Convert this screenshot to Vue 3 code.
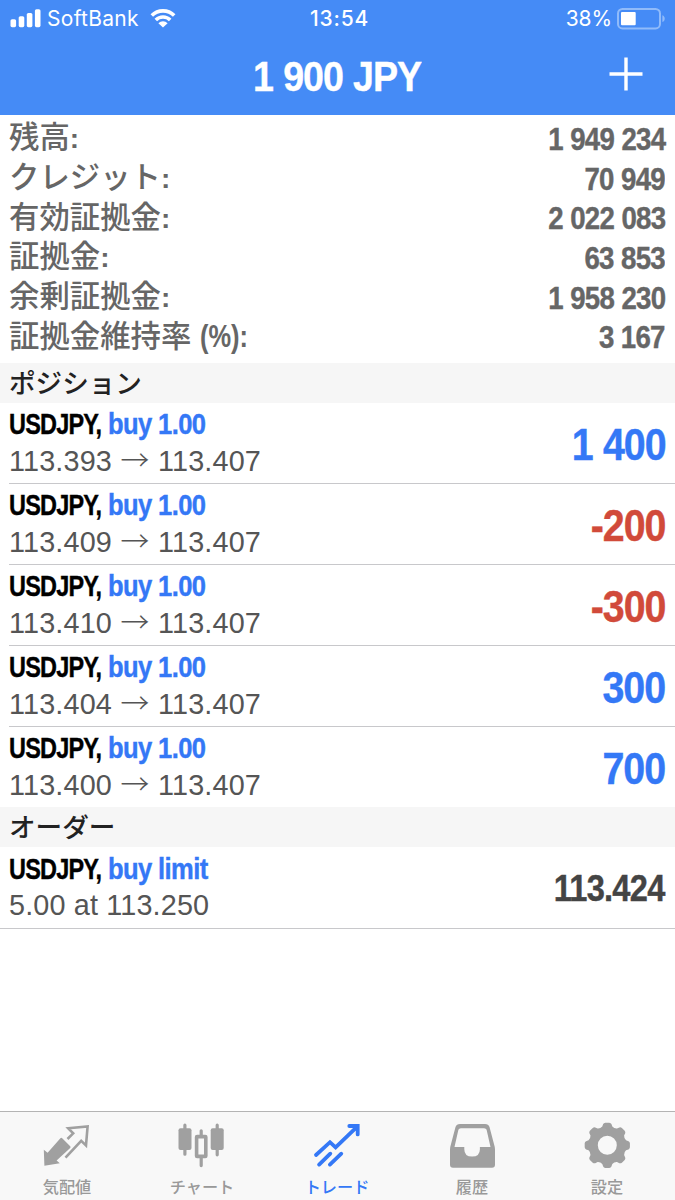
<template>
  <div class="phone">
    <header class="top">
      <div class="status">
        <div class="carrier">
          <svg class="signal" width="31" height="20" viewBox="0 0 31 20">
            <rect x="0.5" y="10.2" width="5.6" height="8" rx="1.6" />
            <rect x="8.7" y="7.2" width="5.6" height="11" rx="1.6" />
            <rect x="16.8" y="4" width="5.6" height="14.2" rx="1.6" />
            <rect x="24.9" y="0.2" width="5.6" height="18" rx="1.6" />
          </svg>
          <span class="name">SoftBank</span>
          <svg class="wifi" width="26" height="20" viewBox="0 0 26 20">
            <path d="M1.8 6.5a15.8 15.8 0 0 1 22.4 0" />
            <path d="M5.8 11a10.2 10.2 0 0 1 14.4 0" />
            <path class="solid" d="M13 18.6l4.6-4.4a6.6 6.6 0 0 0-9.2 0z" />
          </svg>
        </div>
        <span class="clock">13:54</span>
        <div class="power">
          <span class="percent">38%</span>
          <svg width="49" height="22" viewBox="0 0 49 22">
            <rect class="shell" x="1" y="1" width="42" height="19.4" rx="4.5" />
            <path class="cap" d="M45.4 7.3c3.1 1.2 3.1 5.6 0 6.8z" />
            <rect x="4" y="4" width="14.7" height="13.2" rx="1" fill="#fff" />
          </svg>
        </div>
      </div>
      <div class="title-bar">
        <h1 class="cond title">1 900 JPY</h1>
        <svg class="plus" width="34" height="34" viewBox="0 0 34 34">
          <path d="M17 0.5v33M0.5 17h33" />
        </svg>
      </div>
    </header>

    <section class="summary">
      <div v-for="row in summary" :key="row.label" class="summary-row">
        <span class="label">{{ row.label }}<span v-if="row.unit" class="cond unit">{{ row.unit }}</span><span v-else class="colon">:</span></span>
        <span class="cond amount">{{ row.value }}</span>
      </div>
    </section>

    <h2 class="section-title">ポジション</h2>
    <ul class="list">
      <li v-for="p in positions" :key="p.open" class="item">
        <div class="info">
          <div class="deal">
            <span class="cond symbol">USDJPY,</span>
            <span class="cond side">buy 1.00</span>
          </div>
          <div class="price">{{ p.open }}<span class="arrow">→</span>113.407</div>
        </div>
        <span class="cond profit" :class="{ loss: p.profit.startsWith('-') }">{{ p.profit }}</span>
      </li>
    </ul>

    <h2 class="section-title">オーダー</h2>
    <ul class="list orders">
      <li class="item">
        <div class="info">
          <div class="deal">
            <span class="cond symbol">USDJPY,</span>
            <span class="cond side">buy limit</span>
          </div>
          <div class="price">5.00 at 113.250</div>
        </div>
        <span class="cond profit current">113.424</span>
      </li>
    </ul>

    <nav class="tabs">
      <a class="tab">
        <svg width="50" height="50" viewBox="0 0 50 50">
          <path class="fill" d="M18.4 16.2q.9-.8 1.8 0l8 8q.8.9 0 1.7L14.6 38.6l3.2 2.7-15.4 2.4-.6-16 3.8 3z" />
          <path class="line" d="M25.5 17l5.7-5.7-5-5 19.4-1.9-1.6 19-4.8-4.6-15.7 16.9" />
        </svg>
        <span>気配値</span>
      </a>
      <a class="tab">
        <svg width="50" height="50" viewBox="0 0 50 50">
          <path class="wick" d="M7.9 3.2v29M24.2 8.8v4.5M24.2 36v7.6M40.2 3.2v29.6" />
          <rect class="fill" x="1.5" y="6.3" width="13" height="21.7" rx="2" />
          <rect class="hollow" x="19.6" y="14.6" width="9.2" height="19.8" rx="0.5" />
          <rect class="fill" x="33.7" y="6.3" width="13" height="21.7" rx="2" />
        </svg>
        <span>チャート</span>
      </a>
      <a class="tab active">
        <svg width="50" height="50" viewBox="0 0 50 50">
          <path class="trend" d="M4 33L18 20.2l5.6 5.1L45.2 4.6M37.3 4h8.4v8.4M7.1 42.6l11.2-10.9M17.9 42.6l11.4-10.9" />
        </svg>
        <span>トレード</span>
      </a>
      <a class="tab">
        <svg width="50" height="50" viewBox="0 0 50 50">
          <path class="fill" fill-rule="evenodd" d="M12.9 2h25.2q3.4 0 4.4 3l4.8 18.2q.7 2 .7 4v15.5q0 3-3 3H6q-3 0-3-3V27.2q0-2 .7-4L8.5 5q1-3 4.4-3zM13.9 6.2q-2 0-2.5 1.6L7.5 25h9.8v2.2q0 7.4 7.8 7.4t7.8-7.4V25h10.6L39.6 7.8q-.5-1.6-2.5-1.6z" />
        </svg>
        <span>履歴</span>
      </a>
      <a class="tab">
        <svg width="50" height="50" viewBox="0 0 50 50">
          <path class="fill" fill-rule="evenodd" :d="gearPath" />
        </svg>
        <span>設定</span>
      </a>
    </nav>
  </div>
</template>

<script setup>
const summary = [
  { label: '残高', value: '1 949 234' },
  { label: 'クレジット', value: '70 949' },
  { label: '有効証拠金', value: '2 022 083' },
  { label: '証拠金', value: '63 853' },
  { label: '余剰証拠金', value: '1 958 230' },
  { label: '証拠金維持率', unit: '(%):', value: '3 167' }
]

const positions = [
  { open: '113.393', profit: '1 400' },
  { open: '113.409', profit: '-200' },
  { open: '113.410', profit: '-300' },
  { open: '113.404', profit: '300' },
  { open: '113.400', profit: '700' }
]

// 8 枚歯の歯車
const gearPath = buildGear(25.3, 23.3, 8)

function buildGear(cx, cy, teeth) {
  const pt = (r, deg) => {
    const a = (deg * Math.PI) / 180
    return `${(cx + r * Math.sin(a)).toFixed(2)} ${(cy - r * Math.cos(a)).toFixed(2)}`
  }
  let d = ''
  for (let i = 0; i < teeth; i++) {
    const c = (360 / teeth) * i
    d += `${i ? 'L' : 'M'}${pt(19.4, c - 15)}L${pt(21.6, c - 11)}Q${pt(22.7, c - 9)} ${pt(22.7, c - 5)}`
    d += `L${pt(22.7, c + 5)}Q${pt(22.7, c + 9)} ${pt(21.6, c + 11)}L${pt(19.4, c + 15)}Q${pt(18, c + 22.5)} ${pt(19.4, c + 30)}`
  }
  return `${d}ZM${cx - 9.5} ${cy}a9.5 9.5 0 1 0 19 0a9.5 9.5 0 1 0-19 0z`
}
</script>

<style>
body {
  background: #fff;
}
</style>

<style scoped>
.phone {
  width: 675px;
  height: 1200px;
  display: flex;
  flex-direction: column;
  overflow: hidden;
  background: #fff;
  font-family: "Liberation Sans", "Noto Sans CJK JP", sans-serif;
}

/* 横幅を詰めた見出し・数値用の書体 */
.cond {
  display: inline-block;
  white-space: nowrap;
  font-weight: 700;
  transform-origin: left center;
  -webkit-text-stroke: 0.4px currentColor;
}

.top {
  height: 115px;
  flex: none;
  background: #458bf6;
  color: #fff;
}

.status {
  height: 37px;
  padding: 0 10px;
  display: grid;
  grid-template-columns: 1fr auto 1fr;
  align-items: center;
  font-family: Inter, sans-serif;
  font-size: 21px;
}

.carrier,
.power {
  display: flex;
  align-items: center;
}

.signal {
  fill: #fff;
}

.name {
  margin-left: 6px;
  letter-spacing: 0.3px;
}

.wifi {
  margin-left: 11px;
  fill: none;
  stroke: #fff;
  stroke-width: 3.6;
}

.wifi .solid {
  fill: #fff;
  stroke: none;
}

.clock {
  padding-left: 4px;
  font-weight: 500;
  letter-spacing: 0.8px;
}

.power {
  justify-content: flex-end;
  gap: 5px;
  margin-right: -1px;
}

.percent {
  letter-spacing: -0.1px;
}

.shell {
  fill: none;
  stroke: #90bbfa;
  stroke-width: 2;
}

.cap {
  fill: #90bbfa;
}

.title-bar {
  height: 77px;
  padding: 0 32px;
  display: grid;
  grid-template-columns: 1fr auto 1fr;
  align-items: center;
}

.title {
  grid-column: 2;
  margin: 0;
  font-size: 43px;
  line-height: 79px;
  letter-spacing: -1.2px;
  word-spacing: 1px;
  transform: scaleX(0.875);
  transform-origin: center;
}

.plus {
  justify-self: end;
  margin-bottom: 5px;
  stroke: #fff;
  stroke-width: 3.4;
}

.summary {
  height: 249px;
  box-sizing: border-box;
  padding: 4px 10px 0 9px;
  flex: none;
  color: #666;
}

.summary-row {
  height: 39.7px;
  display: flex;
  justify-content: space-between;
  align-items: center;
  line-height: 39px;
}

.label {
  margin-top: -3px;
  font-family: "Noto Sans CJK JP", sans-serif;
  font-size: 30.4px;
  font-weight: 500;
}

.colon,
.unit {
  font-family: "Liberation Sans", sans-serif;
  font-weight: 700;
  font-size: 28px;
}

.unit {
  margin-left: 9px;
  font-size: 31px;
  -webkit-text-stroke: 0;
  transform: scaleX(0.82);
}

.amount {
  margin-top: 1px;
  font-size: 30.5px;
  letter-spacing: -0.8px;
  word-spacing: 0.4px;
  transform: scaleX(0.905);
  transform-origin: right center;
}

.section-title {
  height: 40px;
  margin: -1px 0 0;
  padding-left: 9px;
  flex: none;
  background: #f6f6f6;
  color: #222;
  font-family: "Noto Sans CJK JP", sans-serif;
  font-size: 26.6px;
  font-weight: 500;
  line-height: 38px;
}

.list {
  margin: 0;
  padding: 0 0 0 9px;
  list-style: none;
}

.item {
  height: 81px;
  box-sizing: border-box;
  padding-right: 10px;
  display: flex;
  justify-content: space-between;
  align-items: center;
  border-bottom: 1px solid #c8c8cb;
}

.list:not(.orders) .item:last-child {
  border-bottom-color: transparent;
}

.orders {
  padding-left: 0;
  border-bottom: 1px solid #c8c8cb;
}

.orders .item {
  padding: 1px 10px 0 9px;
  border-bottom: 0;
}

.deal {
  display: flex;
  height: 38px;
  line-height: 36px;
  font-size: 29.5px;
}

.symbol {
  width: 99px;
  color: #000;
  letter-spacing: -1px;
  transform: scaleX(0.795);
}

.side {
  color: #3478f6;
  letter-spacing: -0.7px;
  transform: scaleX(0.866);
}

.price {
  height: 37px;
  color: #555;
  font-size: 28.8px;
  line-height: 33px;
  letter-spacing: 0.15px;
  white-space: nowrap;
}

.arrow {
  display: inline-block;
  width: 46px;
  text-align: center;
  font-family: "Noto Sans CJK JP", sans-serif;
  font-weight: 300;
  line-height: 30px;
}

.profit {
  padding-top: 5px;
  color: #3478f6;
  font-size: 43.5px;
  letter-spacing: -1.2px;
  word-spacing: 0.6px;
  transform: scaleX(0.905);
  transform-origin: right center;
}

.profit.loss {
  color: #d14a3a;
}

.profit.current {
  padding-top: 1px;
  color: #444;
  font-size: 36px;
  letter-spacing: -0.8px;
}

.tabs {
  height: 89px;
  box-sizing: border-box;
  margin-top: auto;
  flex: none;
  display: grid;
  grid-template-columns: repeat(5, 135px);
  border-top: 1px solid #b4b4b4;
  background: #f8f8f8;
}

.tab {
  padding: 10px 1px 0 0;
  display: flex;
  flex-direction: column;
  align-items: center;
  color: #999;
  font-family: "Noto Sans CJK JP", sans-serif;
  font-size: 16.2px;
  font-weight: 500;
  line-height: 28px;
}

.tab svg {
  flex: none;
}

.tab.active {
  color: #3478f6;
}

.fill {
  fill: #a0a0a0;
}

.line,
.hollow {
  fill: none;
  stroke: #a0a0a0;
  stroke-width: 2.6;
}

.hollow {
  stroke-width: 3.6;
}

.wick {
  stroke: #a0a0a0;
  stroke-width: 3.2;
  stroke-linecap: round;
}

.trend {
  fill: none;
  stroke: #3478f6;
  stroke-width: 3.8;
  stroke-linecap: round;
}
</style>
